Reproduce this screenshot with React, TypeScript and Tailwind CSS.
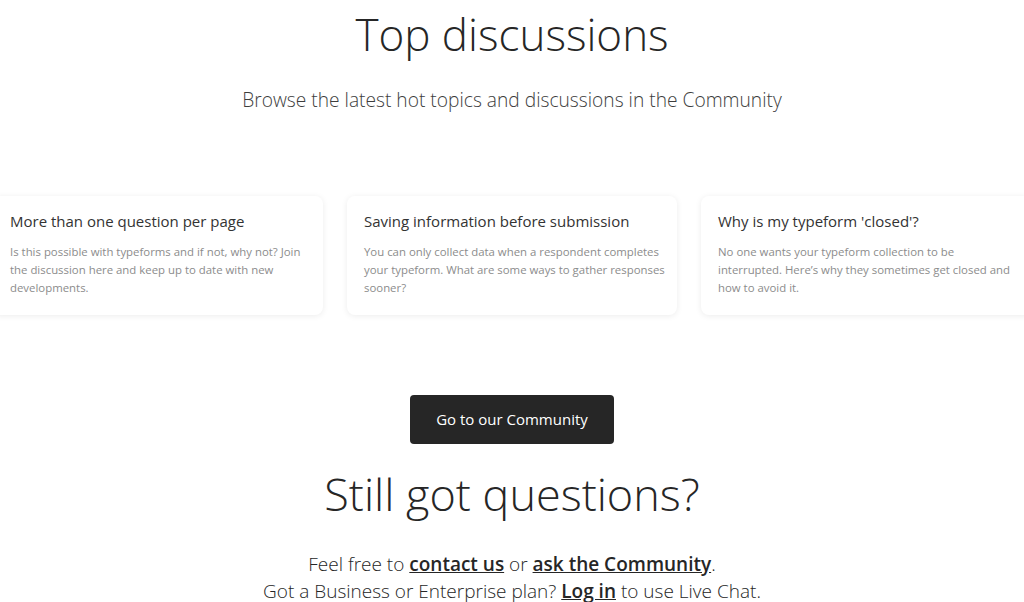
export default function App() {
  const cards = [
    {
      t: "More than one question per page",
      b: "Is this possible with typeforms and if not, why not? Join the discussion here and keep up to date with new developments.",
      w: "w-[299px]",
    },
    {
      t: "Saving information before submission",
      b: "You can only collect data when a respondent completes your typeform. What are some ways to gather responses sooner?",
      w: "w-[301px]",
    },
    {
      t: "Why is my typeform 'closed'?",
      b: "No one wants your typeform collection to be interrupted. Here\u2019s why they sometimes get closed and how to avoid it.",
      w: "w-[292px]",
    },
  ];
  return (
    <div
      className="w-[1024px] h-[602px] overflow-hidden bg-white text-[#262626] flex flex-col items-center"
      style={{ fontFamily: '"Open Sans", "Liberation Sans", sans-serif' }}
    >
      <h1 className="text-[44px] font-light leading-[64px] mt-[2px] text-[#262626]">Top discussions</h1>
      <p className="text-[19.2px] font-light leading-[28px] mt-[20px] text-[#3d3d3d]">
        Browse the latest hot topics and discussions in the Community
      </p>
      <div className="w-[1038px] shrink-0 flex gap-[24px] mt-[82px]">
        {cards.map((c) => (
          <div
            key={c.t}
            className="w-[330px] h-[119px] shrink-0 rounded-[8px] bg-white pl-[17px] pt-[14px] shadow-[0_1px_6px_rgba(0,0,0,0.08)]"
          >
            <h3 className="text-[15px] leading-[22px] text-[#333]">{c.t}</h3>
            <p className={`${c.w} text-[11.4px] leading-[18px] mt-[11px] text-[#8c8c8c]`}>{c.b}</p>
          </div>
        ))}
      </div>
      <button className="mt-[80px] w-[204px] h-[49px] shrink-0 rounded-[4px] bg-[#262626] text-white text-[15px] font-medium">
        Go to our Community
      </button>
      <h2 className="text-[45px] font-light leading-[60px] mt-[20px] text-[#262626]">Still got questions?</h2>
      <div className="text-[19px] font-light leading-[27px] mt-[27px] text-center text-[#262626]">
        <p>
          Feel free to <a className="font-semibold underline">contact us</a> or{" "}
          <a className="font-semibold underline">ask the Community</a>.
        </p>
        <p>
          Got a Business or Enterprise plan? <a className="font-semibold underline">Log in</a> to use Live Chat.
        </p>
      </div>
    </div>
  );
}
